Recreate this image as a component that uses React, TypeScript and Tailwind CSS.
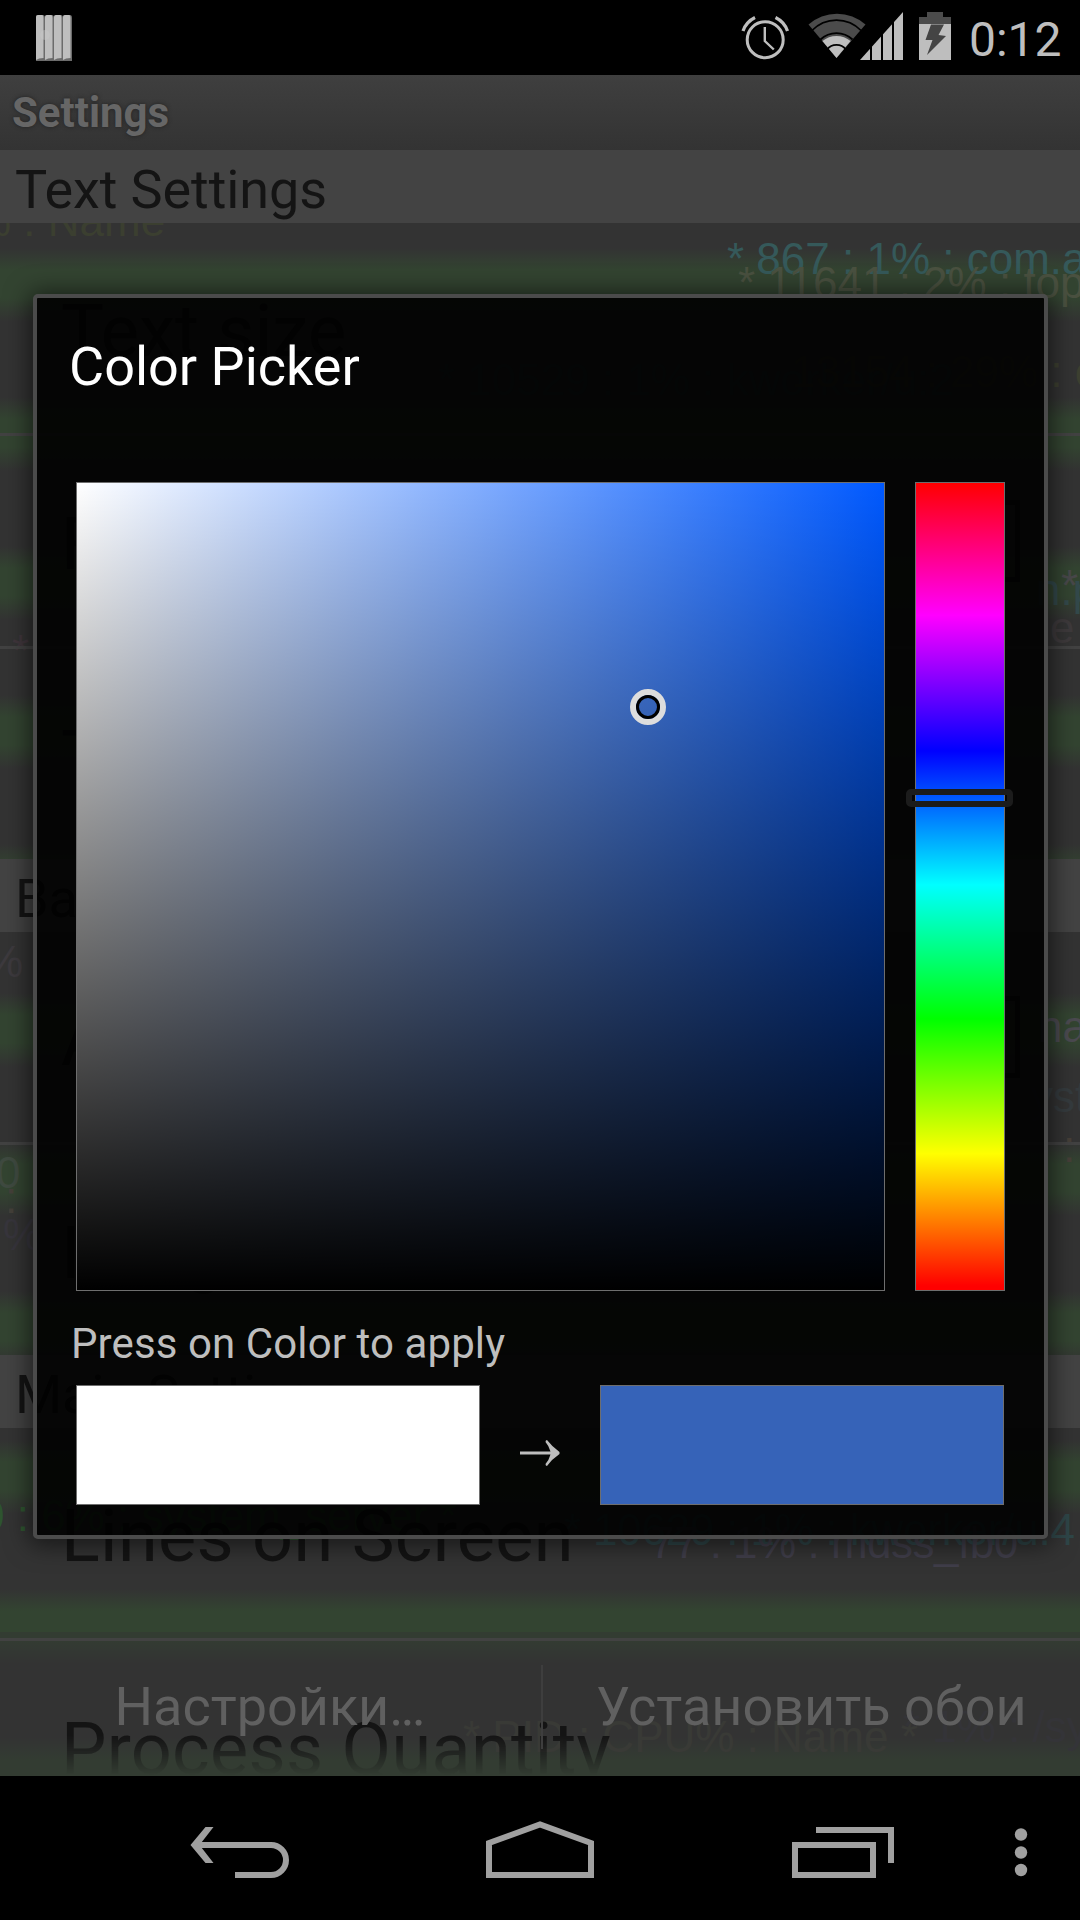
import type { ReactNode } from "react";

const ghosts: { text: string; cls: string }[] = [
  { text: "% : Name", cls: "left-[-28px] top-[194px] text-[#3b3f30]" },
  { text: "* 867 : 1% : com.android", cls: "left-[727px] top-[232px] text-[#35595a]" },
  { text: "* 11641 : 2% : top", cls: "left-[738px] top-[256px] text-[#4a5140]" },
  { text: "* 10529 : 1% : kworker/u:2", cls: "left-[438px] top-[353px] text-[#2f4040]" },
  { text: "13154 : 29% : com", cls: "left-[791px] top-[345px] text-[#3d4031]" },
  { text: "n.phone", cls: "left-[1036px] top-[563px] text-[#33494b]" },
  { text: "*", cls: "left-[1061px] top-[559px] text-[#48484a]" },
  { text: "e", cls: "left-[1050px] top-[601px] text-[#3e3a3c]" },
  { text: "*", cls: "left-[12px] top-[624px] text-[#40363c]" },
  { text: "%", cls: "left-[-16px] top-[935px] text-[#3d3a3e]" },
  { text: "ha", cls: "left-[1038px] top-[1000px] text-[#4b4a50]" },
  { text: "yst", cls: "left-[1031px] top-[1070px] text-[#353b3e]" },
  { text: ":", cls: "left-[1063px] top-[1120px] text-[#463f38]" },
  { text: "0", cls: "left-[-4px] top-[1146px] text-[#3f4a40]" },
  { text: ":", cls: "left-[5px] top-[1171px] text-[#44403a]" },
  { text: "%", cls: "left-[3px] top-[1208px] text-[#37353c]" },
  { text: "0 : 6% : system_server *", cls: "left-[-20px] top-[1489px] text-[#2f5530]" },
  { text: "* 10629 : 1% : kworker/u:4", cls: "left-[564px] top-[1503px] tracking-[-0.2px] text-[#2f4648]" },
  { text: "77 : 1% : mdss_fb0", cls: "left-[650px] top-[1516px] tracking-[-0.5px] text-[#403e4a]" },
  { text: "* PID : CPU% : Name *", cls: "left-[463px] top-[1710px] text-[#3f4038]" },
  { text: "* 1% : /sys", cls: "left-[903px] top-[1700px] text-[#35343d]" },
];

function StatusIcons() {
  const c = "#bebebe";
  return (
    <svg width="240" height="75" viewBox="730 0 240 75" fill="none">
      <circle cx="765.2" cy="39.7" r="18" stroke={c} strokeWidth="3" />
      <path d="M764.8 27v14l9 8.5" stroke={c} strokeWidth="2.4" />
      <path d="M743 31q3-9 12-13.500M787.500 31q-3-9-12-13.500" stroke={c} strokeWidth="3.2" />
      <path d="M808.500 24.600A43 43 0 0 1 865.500 24.600L836.500 58Z" fill="#4b4b4b" />
      <path d="M822.400 41.100A22 22 0 0 1 850.600 41.100L836.500 58Z" fill={c} />
      <path d="M812 30.500A34 34 0 0 1 861 30.500M820.500 39.500A23.200 23.200 0 0 1 852.500 39.500M827 49.500A12 12 0 0 1 846 49.500" stroke="#000" strokeWidth="1.800" />
      <path d="M860 60L903 12V60Z" fill={c} />
      <path d="M871 10V60M882 10V60M893 10V60" stroke="#000" strokeWidth="2" />
      <path d="M927 12h16v5h8v7h-32v-7h8z" fill="#4b4b4b" />
      <path d="M919 24h32v36h-32z" fill={c} />
      <path d="M931 24.500h13l-5.500 10.500 7.500 1-19 19 5.500-15h-7z" fill="#444" />
    </svg>
  );
}

function StatusBar() {
  return (
    <header className="flex h-[75px] items-center bg-black">
      <svg className="ml-9" width="37" height="46" viewBox="0 0 37 46">
        {[0, 9, 18, 27].map((x) => (
          <g key={x}>
            <path d={`M${x} 2q0-2 2-2h5q2 0 2 3v43h-9z`} fill="#6b6b6b" />
            <path d={`M${x} 2q0-2 2-2h4q1.500 0 1.500 3v40q-5 0-7.500 2z`} fill="#bebebe" />
          </g>
        ))}
        <circle cx="9" cy="20" r="5" fill="#c9c9c9" fillOpacity="0.4" />
      </svg>
      <div className="ml-auto flex items-center">
        <StatusIcons />
        <span className="w-[110px] pt-1 text-[48px] leading-[71px] text-[#bebebe]">
          <span className="-ml-px">0:12</span>
        </span>
      </div>
    </header>
  );
}

function Category({ children }: { children: ReactNode }) {
  return (
    <div className="h-[73px] bg-[#434343] pl-[15px] pt-[3px] text-[54px] leading-[73px] tracking-[-0.1px] text-[#141414]">
      {children}
    </div>
  );
}

function Item({ title, box, last }: { title: string; box?: boolean; last?: boolean }) {
  return (
    <div className={last ? "h-[135px] overflow-hidden" : "h-[213px] border-b-[3px] border-[#424242]"}>
      <div className="flex h-[210px] items-center justify-between pl-[61px] pr-[60px] text-[72px] leading-[210px] tracking-[0.3px] text-[#141414]">
        <span className="whitespace-nowrap pt-[7px]">{title}</span>
        {box && <span className="h-[82px] w-[82px] border-[5px] border-[#141414]" />}
      </div>
    </div>
  );
}

function SectionEndItem({ title, box }: { title: string; box?: boolean }) {
  return (
    <div className="h-[210px] overflow-hidden">
      <Item title={title} box={box} />
    </div>
  );
}

function Dialog() {
  return (
    <section className="absolute left-[33px] top-[219px] flex h-[1245px] w-[1015px] flex-col rounded-[5px] border-4 border-[#4b4b4b] bg-black/90 shadow-[0_2px_24px_4px_rgba(0,0,0,0.55)]">
      <h2 className="ml-[32px] mt-[32px] h-[73px] text-[54px] leading-[73px] text-white">Color Picker</h2>
      <div className="ml-[39px] mt-[79px] flex gap-[30px]">
        <div className="relative h-[809px] w-[809px] shrink-0 border border-[#6e6e6e] bg-[linear-gradient(to_bottom,transparent,#000),linear-gradient(to_right,#fff,#0059ff)]">
          <div className="absolute left-[553px] top-[206px] h-9 w-9 rounded-full border-[6px] border-[#dddddd]">
            <div className="h-6 w-6 rounded-full border-[3px] border-black" />
          </div>
        </div>
        <div className="relative h-[809px] w-[90px] shrink-0 border border-[#6e6e6e] bg-[linear-gradient(to_bottom,#f00_0%,#f0f_16.4%,#00f_33.2%,#0ff_49.8%,#0f0_66.4%,#ff0_83.1%,#f00_99.5%)]">
          <div className="absolute left-[-10px] top-[306px] h-[18px] w-[107px] rounded-[5px] border-[6px] border-[#1c1c1c]" />
        </div>
      </div>
      <p className="ml-[34px] mt-[25px] h-[56px] text-[42px] leading-[56px] tracking-[0.1px] text-[#bebebe]">
        Press on Color to apply
      </p>
      <div className="ml-[39px] mt-[13px] flex items-center">
        <div className="h-[120px] w-[404px] border border-[#6e6e6e] bg-white" />
        <div className="flex w-[120px] justify-center pt-[15px]">
          <svg width="42" height="28" viewBox="0 0 42 28" fill="#bebebe">
            <path d="M1 12.500h30.500q-1.500-5.500-5-9.500 0-2 1.500-2 5 6.500 12.500 12v2q-7.500 5-12.500 12-1.500 0-1.500-2 3.500-4 5-9.500h-30.500z" />
          </svg>
        </div>
        <div className="h-[120px] w-[404px] border border-[#6e6e6e] bg-[#3663b8]" />
      </div>
    </section>
  );
}

function NavBar() {
  return (
    <nav className="h-36 bg-black">
      <svg width="1080" height="144" viewBox="0 1776 1080 144" fill="none" stroke="#a0a0a0" strokeWidth="6">
        <path d="M196 1845h75a15 15 0 0 1 0 30h-36" />
        <path d="M190.500 1845L205.500 1827h8l-14 18 14 18h-8z" fill="#a0a0a0" stroke="none" />
        <path d="M489 1843l51-18.500 51 18.500v32h-102z" />
        <path d="M795 1845h78v30h-78zM816 1830h75v33" />
        <g fill="#a0a0a0" stroke="none">
          <circle cx="1021" cy="1834.500" r="6.200" />
          <circle cx="1021" cy="1852.500" r="6.200" />
          <circle cx="1021" cy="1870" r="6.200" />
        </g>
      </svg>
    </nav>
  );
}

export default function App() {
  return (
    <div className="relative h-[1920px] w-[1080px] overflow-hidden bg-black font-[Roboto,sans-serif]">
      <div className="absolute left-0 top-[208px] h-[1568px] w-full bg-[#333333] bg-[repeating-linear-gradient(to_bottom,#333333_0px,#333333_40px,#334431_62px,#334431_90px,#333333_114px,#333333_149px)]" />
      <div className="absolute left-0 top-0 h-[1776px] w-full overflow-hidden font-['Liberation_Sans',sans-serif]">
        {ghosts.map((g, i) => (
          <span key={i} className={`absolute whitespace-nowrap text-[44px] leading-[54px] ${g.cls}`}>
            {g.text}
          </span>
        ))}
        <div className="absolute bottom-0 left-0 h-36 w-full bg-[#333333]/50" />
      </div>
      <div className="relative">
        <StatusBar />
        <main className="relative h-[1701px] overflow-hidden">
          <div className="h-[75px] bg-linear-to-b from-[#3f3f3f] to-[#333333] pl-3 text-[42px] font-bold leading-[75px] text-[#666666] [text-shadow:0_0_4px_#222]">
            Settings
          </div>
          <div className="[mask-image:linear-gradient(to_bottom,#000_1585px,transparent_1625px)]">
            <Category>Text Settings</Category>
            <Item title="Text size" />
            <Item title="Font Color" box />
            <SectionEndItem title="Text Shadow" />
            <Category>Background</Category>
            <Item title="Accent Color" box />
            <SectionEndItem title="Image" />
            <Category>Main Settings</Category>
            <Item title="Lines on Screen" />
            <Item title="Process Quantity" last />
          </div>
          <footer className="absolute bottom-0 left-0 flex h-36 w-full items-center pt-[6px] text-[54px] leading-[64px] text-[#606060]">
            <span className="flex flex-1 justify-center pr-[3px]">
              <span>
                Настройки<span className="tracking-[-3px]">...</span>
              </span>
            </span>
            <span className="h-[84px] w-[2px] bg-[#3e3e3e]" />
            <span className="flex flex-1 justify-center">
              <span className="whitespace-nowrap">Установить обои</span>
            </span>
          </footer>
          <Dialog />
        </main>
        <NavBar />
      </div>
    </div>
  );
}
